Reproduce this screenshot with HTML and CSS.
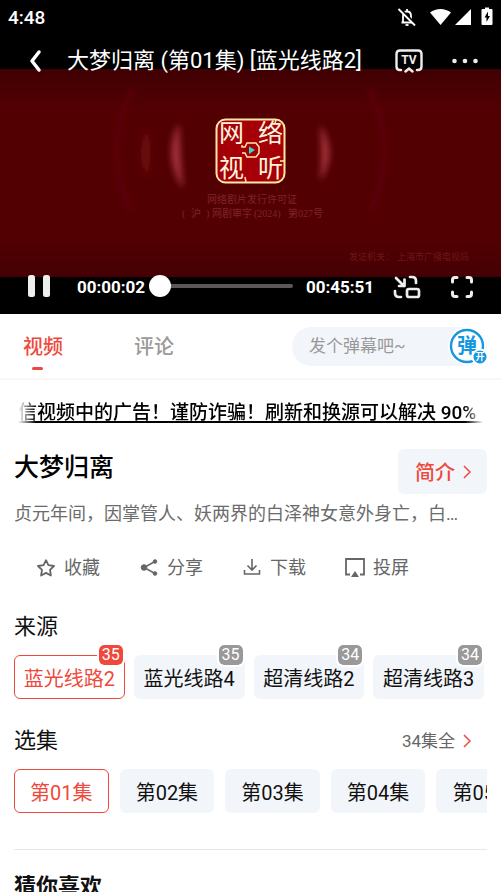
FILE: index.html
```html
<!DOCTYPE html>
<html lang="zh-CN">
<head>
    <meta charset="UTF-8">
    <meta name="viewport" content="width=device-width, initial-scale=1.0">
    <title>大梦归离</title>
    <link rel="stylesheet" href="styles.css">
</head>
<body>
    <section class="player">
        <div class="status-bar">
            <span class="clock">4:48</span>
            <svg class="status-mute" width="20" height="20" viewBox="0 0 20 20" fill="none" stroke="#fff">
                <path d="M4.500 15.500h11M6 15V9c0-3 1.500-4.500 4-4.500S14 6 14 9v6M10 2v2.500" stroke-width="1.800"/>
                <path d="M8.500 18h3" stroke-width="1.800"/>
                <path d="M2.500 1.500L18.500 17.500" stroke="#000" stroke-width="3"/>
                <path d="M1.500 2L18 18.500" stroke-width="1.800"/>
            </svg>
            <svg class="status-icons" width="64" height="20" viewBox="0 0 64 20" fill="#fff">
                <path d="M1 5.500C7 .8 16 .8 22 5.500L11.500 18z"/>
                <path d="M42 2v16H26z"/>
                <path d="M56 .5h4V2h2.500q1 0 1 1v14q0 1-1 1h-9q-1 0-1-1V3q0-1 1-1H56z"/>
                <path d="M59 4.500l-3.500 6h2V15l3.500-6h-2z" fill="#000"/>
            </svg>
        </div>

        <div class="stage">
            <svg class="frame" viewBox="0 0 501 208">
                <defs>
                    <linearGradient id="shade" x1="0" y1="0" x2="0" y2="1">
                        <stop offset="0" stop-color="#400003"/>
                        <stop offset=".2" stop-color="#530003"/>
                        <stop offset=".8" stop-color="#530003"/>
                        <stop offset="1" stop-color="#450003"/>
                    </linearGradient>
                    <filter id="blur" x="-100%" y="-20%" width="300%" height="140%">
                        <feGaussianBlur stdDeviation="3"/>
                    </filter>
                </defs>
                <rect width="501" height="208" fill="url(#shade)"/>
                <g filter="url(#blur)">
                    <path d="M132 20Q102 82 132 144" fill="none" stroke="#5d040d" stroke-width="5"/>
                    <path d="M369 20Q400 82 369 144" fill="none" stroke="#5d040d" stroke-width="5"/>
                    <path d="M148 58Q134 84 148 110Q152 84 148 58z" fill="#6c0c10"/>
                    <path d="M179 54Q162 86 183 120Q180 84 179 54z" fill="#a3333a"/>
                    <path d="M320 56Q339 84 320 112Q323 84 320 56z" fill="#a3333a"/>
                </g>
                <g class="seal">
                    <rect x="216.500" y="50.500" width="68" height="63" rx="9" fill="#a50008" stroke="#ffe7a5" stroke-width="2"/>
                    <path d="M242 76v2h3l2-4h9l3 4v6l-3 4h-9l-2-4h-3M276 51l-1 3M284 92h-4M245 108l1 5" fill="none" stroke="#ffe7a5" stroke-width="1.500"/>
                    <text x="219" y="73">网</text>
                    <text x="258" y="73">络</text>
                    <text x="219" y="108">视</text>
                    <text x="258" y="108">听</text>
                    <path d="M249 77.500l6 3.500-6 4z" fill="#35dcc4"/>
                </g>
                <g class="license">
                    <text x="207" y="134">网络剧片发行许可证</text>
                    <text y="148"><tspan x="182">(</tspan><tspan x="191">沪</tspan><tspan x="206">)</tspan><tspan x="212">网剧审字</tspan><tspan x="254">(2024)</tspan><tspan x="288">第027号</tspan></text>
                </g>
                <g class="issuer">
                    <text x="349" y="191">发证机关：</text>
                    <text x="397" y="191">上海市广播电视局</text>
                </g>
            </svg>

            <header class="player-top">
                <button class="icon-btn" aria-label="返回">
                    <svg width="14" height="24" viewBox="0 0 14 24" fill="none" stroke="#fff" stroke-width="3.500" stroke-linecap="round" stroke-linejoin="round">
                        <path d="M11 3L4 12l7 9"/>
                    </svg>
                </button>
                <h1 class="player-title">大梦归离 (第01集) [蓝光线路2]</h1>
                <button class="icon-btn" aria-label="电视">
                    <svg width="28" height="24" viewBox="0 0 28 24" fill="none" stroke="#eee" stroke-width="2.400" stroke-linecap="round" stroke-linejoin="round">
                        <path d="M6 21H5q-3.500 0-3.500-3.500V5Q1.500 1.500 5 1.500h18q3.500 0 3.500 3.500v12.500q0 3.500-3.500 3.500h-1M10.500 22.500l3.500-3 3.500 3"/>
                        <text class="tv-text" x="14" y="15">TV</text>
                    </svg>
                </button>
                <button class="icon-btn" aria-label="更多">
                    <svg width="26" height="6" viewBox="0 0 26 6" fill="#eee">
                        <circle cx="2.500" cy="3" r="2.300"/>
                        <circle cx="13" cy="3" r="2.300"/>
                        <circle cx="23.500" cy="3" r="2.300"/>
                    </svg>
                </button>
            </header>

            <div class="player-controls">
                <button class="icon-btn" aria-label="暂停">
                    <svg width="22" height="24" viewBox="0 0 22 24" fill="#eee">
                        <rect x="0" y="0" width="7" height="22" rx="2.500"/>
                        <rect x="15" y="0" width="7" height="22" rx="2.500"/>
                    </svg>
                </button>
                <span class="time">00:00:02</span>
                <input class="seek" type="range" min="0" max="2751" value="2" aria-label="播放进度">
                <span class="time time-total">00:45:51</span>
                <button class="icon-btn" aria-label="小窗播放">
                    <svg width="28" height="24" viewBox="0 0 28 24" fill="none" stroke="#eee" stroke-width="2.700" stroke-linecap="round" stroke-linejoin="round">
                        <path d="M3 3l8 8M11.500 4.500V11H6M17 2h2q4 0 4 4v2M2 16v2q0 4 4 4h2"/>
                        <rect x="14" y="14" width="12" height="8" rx="2"/>
                    </svg>
                </button>
                <button class="icon-btn" aria-label="全屏">
                    <svg width="24" height="24" viewBox="0 0 24 24" fill="none" stroke="#eee" stroke-width="3" stroke-linecap="round" stroke-linejoin="round">
                        <path d="M2.500 7V5q0-2.500 2.500-2.500h2M17 2.500h2q2.500 0 2.500 2.500v2M21.500 17v2q0 2.500-2.500 2.500h-2M7 21.500H5Q2.500 21.500 2.500 19v-2"/>
                    </svg>
                </button>
            </div>
        </div>
    </section>

    <nav class="tabs">
        <a class="tab active" href="#video">视频</a>
        <a class="tab" href="#comments">评论</a>
        <div class="danmu">
            <input class="danmu-input" type="text" placeholder="发个弹幕吧~" aria-label="发个弹幕吧">
            <button class="danmu-toggle" aria-label="弹幕开关">
                <svg width="40" height="40" viewBox="0 0 40 40">
                    <circle cx="20" cy="20" r="19" fill="#fff"/>
                    <circle cx="20" cy="20" r="16" fill="#fff" stroke="#1597e0" stroke-width="2.400"/>
                    <text class="danmu-text" x="20" y="27">弹</text>
                    <circle cx="33" cy="31" r="7.500" fill="#1597e0" stroke="#fff" stroke-width="2"/>
                    <text class="danmu-on" x="33" y="34">开</text>
                </svg>
            </button>
        </div>
    </nav>

    <main class="content" id="video">
        <p class="notice">信视频中的广告！谨防诈骗！刷新和换源可以解决 90%</p>

        <div class="title-row">
            <h2 class="title">大梦归离</h2>
            <button class="intro-btn">简介
                <svg width="8" height="14" viewBox="0 0 8 14" fill="none" stroke="#ee493c" stroke-width="1.500"><path d="M1 1l6 6-6 6"/></svg>
            </button>
        </div>
        <p class="desc">贞元年间，因掌管人、妖两界的白泽神女意外身亡，白…</p>

        <div class="actions">
            <button class="action">
                <svg width="20" height="20" viewBox="0 0 20 20" fill="none" stroke="#666" stroke-width="1.800" stroke-linejoin="round"><path d="M10 2.200l2.400 5 5.600.8-4 3.900.9 5.600-4.900-2.600-4.900 2.600.9-5.600L2 8l5.600-.8z"/></svg>
                收藏
            </button>
            <button class="action">
                <svg width="20" height="20" viewBox="0 0 20 20" fill="#666" stroke="#666"><path d="M16 3.500L5 9.500l11 6" fill="none" stroke-width="1.500"/><circle cx="5" cy="9.500" r="2.800"/><circle cx="16" cy="3.500" r="1.800"/><circle cx="16" cy="15.500" r="1.800"/></svg>
                分享
            </button>
            <button class="action">
                <svg width="20" height="20" viewBox="0 0 20 20" fill="none" stroke="#666" stroke-width="1.600"><path d="M10 1v11M5.500 7.500L10 12l4.500-4.500M2.500 12v4h15v-4"/></svg>
                下载
            </button>
            <button class="action">
                <svg width="20" height="20" viewBox="0 0 20 20" fill="none" stroke="#666" stroke-width="1.800"><path d="M5 16.500H1V1h18v15.500h-4"/><path d="M10 13l4 6H6z" fill="#666" stroke="none"/></svg>
                投屏
            </button>
        </div>

        <h3 class="section-title">来源</h3>
        <div class="sources">
            <button class="chip selected">蓝光线路2<span class="badge">35</span></button>
            <button class="chip">蓝光线路4<span class="badge">35</span></button>
            <button class="chip">超清线路2<span class="badge">34</span></button>
            <button class="chip">超清线路3<span class="badge">34</span></button>
        </div>

        <div class="section-head">
            <h3 class="section-title">选集</h3>
            <a class="more" href="#all">34集全
                <svg width="8" height="14" viewBox="0 0 8 14" fill="none" stroke="#ee493c" stroke-width="1.500"><path d="M1 1l6 6-6 6"/></svg>
            </a>
        </div>
        <div class="episodes">
            <button class="chip selected">第01集</button>
            <button class="chip">第02集</button>
            <button class="chip">第03集</button>
            <button class="chip">第04集</button>
            <button class="chip">第05集</button>
        </div>

        <h3 class="section-title recommend">猜你喜欢</h3>
    </main>
</body>
</html>
```
FILE: styles.css
```css
* {
    box-sizing: border-box;
}

body {
    margin: 0;
    height: 100vh;
    overflow: hidden;
    background-color: #fff;
    color: #111;
    font-family: Roboto, "Noto Sans CJK SC", sans-serif;
    font-size: 20px;
}

h1, h2, h3, p {
    margin: 0;
    font-weight: 400;
}

a {
    text-decoration: none;
}

button {
    padding: 0;
    border: none;
    background: none;
    color: inherit;
    font: inherit;
    cursor: pointer;
}

svg {
    display: block;
    flex-shrink: 0;
}

/* Player */
.player {
    background-color: #000;
    color: #fff;
}

.status-bar {
    display: flex;
    align-items: center;
    height: 34px;
    padding: 0 8px;
}

.clock {
    flex: 1;
    font-size: 19px;
    font-weight: 500;
}

.status-mute {
    margin-right: 12px;
}

.stage {
    position: relative;
    padding: 35px 0 37px;
}

.frame {
    width: 100%;
}

.seal text {
    font-size: 25px;
    font-weight: 400;
    fill: #fff3dc;
}

.license text {
    font-family: "Liberation Serif", "Noto Sans CJK SC", serif;
    font-size: 10px;
    fill: #7e2429;
}

.issuer text {
    font-size: 9px;
    fill: #701519;
}

.icon-btn {
    display: flex;
    align-items: center;
    justify-content: center;
}

.player-top {
    position: absolute;
    top: 0;
    left: 0;
    right: 0;
    display: flex;
    align-items: center;
    height: 54px;
    padding: 0 23px 0 28px;
}

.player-title {
    flex: 1;
    margin-left: 25px;
    font-size: 22px;
    line-height: 34px;
    white-space: nowrap;
}

.player-top .icon-btn + .icon-btn {
    margin-left: 29px;
}

.tv-text {
    font-size: 12px;
    font-weight: 700;
    text-anchor: middle;
    fill: #eee;
    stroke: none;
}

.player-controls {
    position: absolute;
    bottom: 0;
    left: 0;
    right: 0;
    display: flex;
    align-items: center;
    height: 54px;
    padding: 0 27px 0 28px;
}

.time {
    margin-left: 27px;
    font-size: 17px;
    font-weight: 700;
}

.time-total {
    margin-left: 13px;
    margin-right: 19px;
}

.player-controls .icon-btn + .icon-btn {
    margin-left: 29px;
}

.seek {
    flex: 1;
    min-width: 0;
    height: 22px;
    margin: 0 0 2px 4px;
    background: none;
    -webkit-appearance: none;
    appearance: none;
}

.seek::-webkit-slider-runnable-track {
    height: 4px;
    border-radius: 2px;
    background-color: #5a5858;
}

.seek::-webkit-slider-thumb {
    -webkit-appearance: none;
    width: 22px;
    height: 22px;
    margin-top: -9px;
    border-radius: 50%;
    background-color: #fff;
}

/* Tabs */
.tabs {
    display: flex;
    align-items: center;
    height: 66px;
    padding: 0 14px 0 23px;
    border-bottom: 2px solid #f7f7f7;
}

.tab {
    position: relative;
    padding-bottom: 2px;
    margin-right: 71px;
    color: #999;
    font-weight: 500;
}

.tab.active {
    color: #ee493c;
}

.tab.active::after {
    content: "";
    position: absolute;
    left: 9px;
    bottom: -8px;
    width: 11px;
    height: 3px;
    border-radius: 2px;
    background-color: #ee493c;
}

.danmu {
    display: flex;
    align-items: center;
    width: 195px;
    height: 39px;
    margin-left: auto;
    padding-left: 17px;
    border-radius: 20px;
    background-color: #f2f5fa;
}

.danmu-input {
    flex: 1;
    min-width: 0;
    padding: 0;
    border: none;
    outline: none;
    background: none;
    font: inherit;
    font-size: 17px;
}

.danmu-input::placeholder {
    color: #999;
}

.danmu-text {
    font-size: 20px;
    font-weight: 700;
    text-anchor: middle;
    fill: #1597e0;
}

.danmu-on {
    font-size: 9px;
    font-weight: 700;
    text-anchor: middle;
    fill: #fff;
}

/* Content */
.content {
    padding: 18px 14px 0;
}

.notice {
    margin: 0 4px;
    overflow: hidden;
    background: linear-gradient(#000, #000) 0 23px / 100% 2px no-repeat;
    font-size: 19px;
    font-weight: 500;
    line-height: 30px;
    white-space: nowrap;
    color: #000;
    -webkit-mask-image: linear-gradient(90deg, transparent, #000 18px, #000 calc(100% - 18px), transparent);
    mask-image: linear-gradient(90deg, transparent, #000 18px, #000 calc(100% - 18px), transparent);
}

.title-row {
    display: flex;
    align-items: center;
    justify-content: space-between;
    margin-top: 21px;
}

.title {
    font-size: 25px;
    font-weight: 500;
    line-height: 36px;
    padding-bottom: 7px;
    color: #000;
}

.intro-btn {
    display: flex;
    align-items: center;
    gap: 8px;
    height: 45px;
    padding: 0 16px 0 17px;
    border-radius: 6px;
    background-color: #f2f5fa;
    color: #ee493c;
    font-weight: 500;
}

.desc {
    margin-top: 7px;
    overflow: hidden;
    color: #6b6b6b;
    font-size: 18px;
    line-height: 26px;
    text-overflow: ellipsis;
    white-space: nowrap;
}

.actions {
    display: flex;
    gap: 39px;
    margin-top: 28px;
    padding-left: 22px;
}

.action {
    display: flex;
    align-items: center;
    gap: 8px;
    color: #666;
    font-size: 18px;
    line-height: 26px;
}

.section-title {
    font-size: 22px;
    line-height: 32px;
}

.actions + .section-title {
    margin-top: 30px;
}

.sources {
    display: grid;
    grid-template-columns: repeat(4, 1fr);
    gap: 9px;
    margin: 12px 3px 0 0;
}

.chip {
    position: relative;
    flex: none;
    height: 44px;
    padding: 0;
    border-radius: 6px;
    background-color: #f2f5fa;
    white-space: nowrap;
}

.chip.selected {
    border: 1px solid #ee493c;
    background-color: #fff;
    color: #ee493c;
}

.badge {
    position: absolute;
    top: -12px;
    right: 0;
    padding: 0 3px;
    border: 2px solid #fff;
    border-radius: 7px;
    background-color: #999;
    background-clip: padding-box;
    color: #fff;
    font-size: 16px;
    line-height: 20px;
}

.selected .badge {
    top: -13px;
    right: -1px;
    background-color: #ee493c;
}

.section-head {
    display: flex;
    align-items: center;
    justify-content: space-between;
    margin-top: 26px;
}

.more {
    display: flex;
    align-items: center;
    gap: 8px;
    padding-right: 16px;
    color: #666;
    font-size: 17px;
    line-height: 24px;
}

.episodes {
    display: flex;
    gap: 11px;
    margin-top: 12px;
    overflow: hidden;
}

.episodes .chip {
    width: 20%;
}

.recommend {
    margin-top: 36px;
    padding-top: 21px;
    border-top: 1px solid #e8e8e8;
    font-weight: 700;
}
```
